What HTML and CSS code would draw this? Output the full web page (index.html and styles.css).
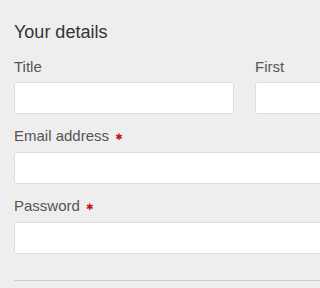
FILE: index.html
```html
<!DOCTYPE html>
<html>
<head>
<meta charset="utf-8">
<link rel="stylesheet" href="styles.css">
</head>
<body>
<div class="panel">
  <h2 class="heading">Your details</h2>
  <div class="row">
    <div class="field">
      <label class="label">Title</label>
      <input class="input" type="text">
    </div>
    <div class="field">
      <label class="label">First</label>
      <input class="input" type="text">
    </div>
  </div>
  <div class="field wide">
    <label class="label">Email address <span class="req">&#10033;</span></label>
    <input class="input" type="text">
  </div>
  <div class="field wide">
    <label class="label">Password <span class="req">&#10033;</span></label>
    <input class="input" type="password">
  </div>
  <hr class="divider">
</div>
</body>
</html>
```
FILE: styles.css
```css
html, body {
  margin: 0;
  padding: 0;
  background: #eeeeee;
  overflow: hidden;
}
.panel {
  padding: 21px 0 0 14px;
  font-family: "Liberation Sans", Arial, sans-serif;
}
.heading {
  margin: 0 0 14px 0;
  font-size: 18px;
  line-height: 22px;
  font-weight: normal;
  color: #333333;
}
.row {
  display: grid;
  grid-template-columns: 220px 220px;
  column-gap: 21px;
}
.field {
  display: flex;
  flex-direction: column;
  margin-bottom: 12px;
}
.wide {
  width: 460px;
}
.label {
  font-size: 15px;
  line-height: 20px;
  color: #555555;
  margin-bottom: 5px;
  white-space: nowrap;
}
.req {
  color: #c0161b;
  font-family: "DejaVu Sans", sans-serif;
  font-size: 9px;
  vertical-align: 1px;
  margin-left: 2px;
}
.input {
  box-sizing: border-box;
  height: 32px;
  width: 100%;
  margin: 0;
  border: 1px solid #dddddd;
  border-radius: 3px;
  background: #ffffff;
  outline: none;
}
.divider {
  width: 460px;
  margin: 26px 0 0 0;
  border: 0;
  border-top: 1px solid #cccccc;
  height: 0;
}
```
